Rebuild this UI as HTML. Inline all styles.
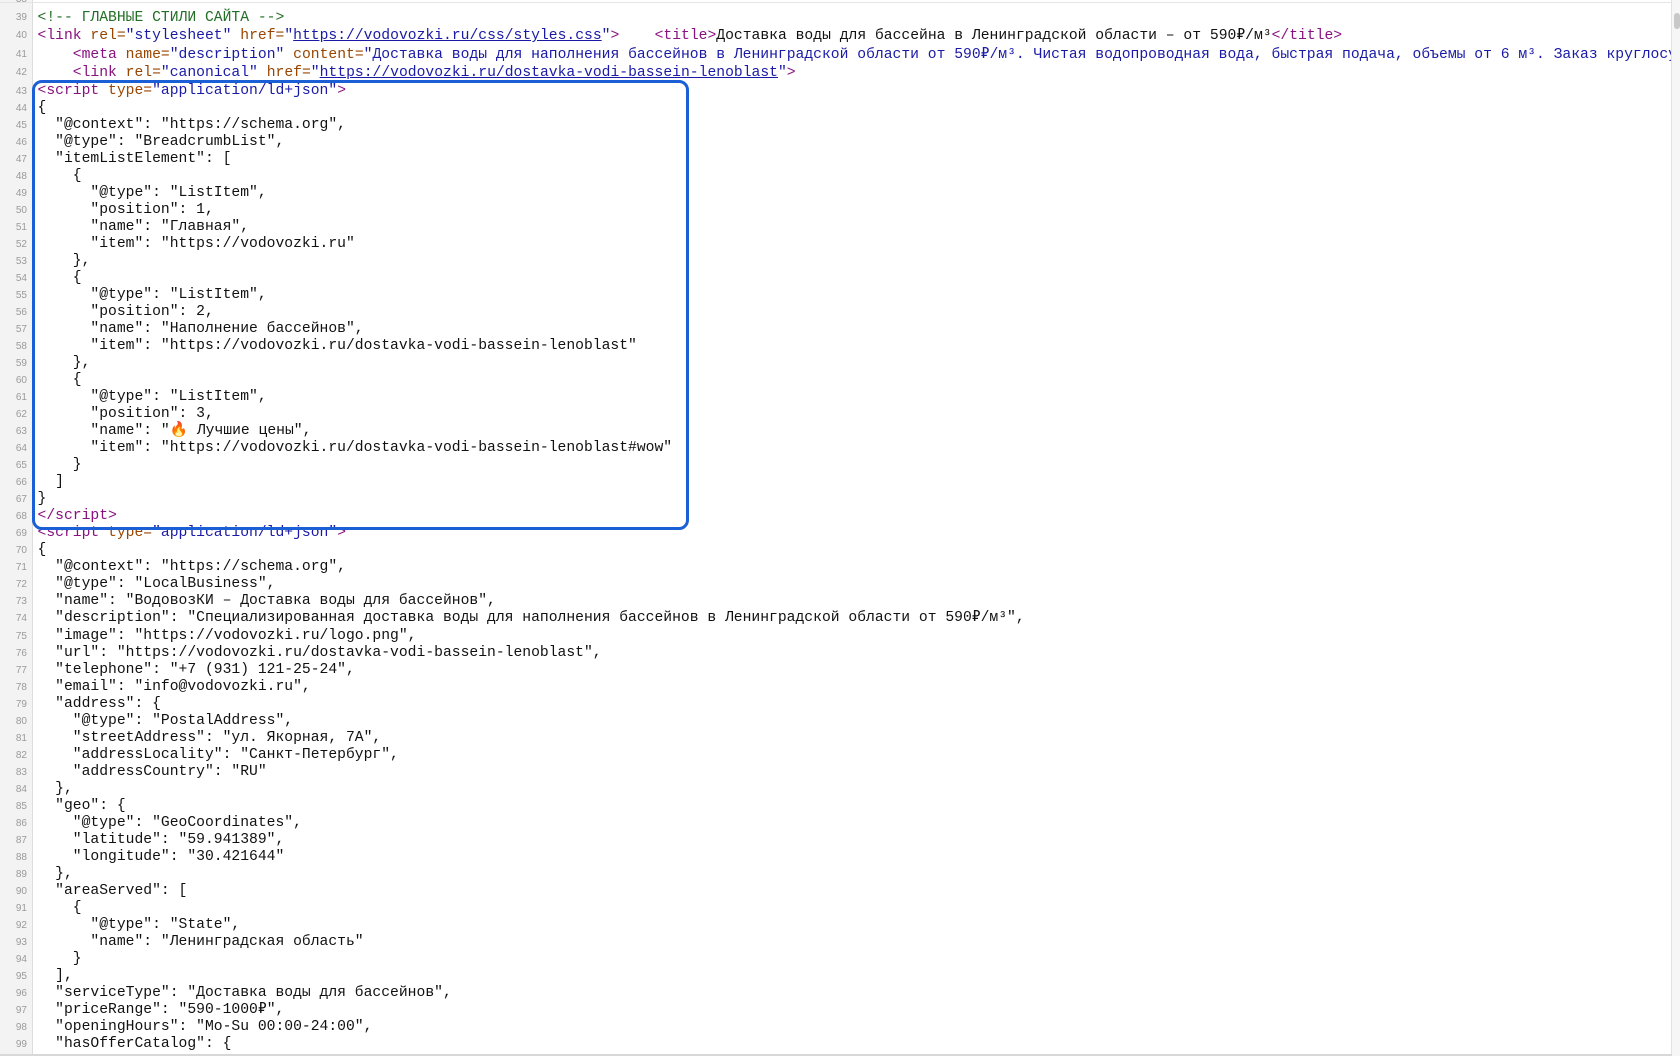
<!DOCTYPE html>
<html><head><meta charset="utf-8"><style>
html,body{margin:0;padding:0;background:#fff;width:1680px;height:1056px;overflow:hidden;position:relative}
.gut{position:absolute;left:0;top:0;width:32px;height:1054px;background:#f3f3f3;border-right:1px solid #dcdcdc}
.topl{position:absolute;left:0;top:2px;width:1672px;height:1px;background:#e4e4e4}
.botl{position:absolute;left:0;top:1054px;width:1672px;height:2px;background:#d8d8d8}
.sb{position:absolute;left:1671px;top:0;width:9px;height:1056px;background:#f6f6f6;border-left:1px solid #e2e2e2}
.sbt{position:absolute;left:1674px;top:13px;width:6px;height:16px;border-radius:3px;background:#c8c8c8}
.nums{position:absolute;left:0;width:27px;text-align:right;font:10px "Liberation Sans",sans-serif;color:#9a9a9a;margin:0}
pre{position:absolute;left:37.5px;margin:0;font:14.7px "Liberation Mono","DejaVu Sans Mono",monospace;color:#111;white-space:pre}
.top{top:-9.1px;line-height:18.2px}
.bot{top:82.5px;line-height:17.03px}
.c{color:#236e25}.t{color:#881280}.a{color:#994500}.v{color:#1a1aa6}.u{text-decoration:underline}
.box{position:absolute;left:32px;top:80px;width:651px;height:444px;border:3.5px solid #1a5fd6;border-radius:10px}
</style></head><body>
<div class="gut"></div><div class="topl"></div>
<div class="nums top">38<br>39<br>40<br>41<br>42</div>
<div class="nums bot">43<br>44<br>45<br>46<br>47<br>48<br>49<br>50<br>51<br>52<br>53<br>54<br>55<br>56<br>57<br>58<br>59<br>60<br>61<br>62<br>63<br>64<br>65<br>66<br>67<br>68<br>69<br>70<br>71<br>72<br>73<br>74<br>75<br>76<br>77<br>78<br>79<br>80<br>81<br>82<br>83<br>84<br>85<br>86<br>87<br>88<br>89<br>90<br>91<br>92<br>93<br>94<br>95<br>96<br>97<br>98<br>99</div>
<pre class="top"> 
<span class="c">&lt;!-- ГЛАВНЫЕ СТИЛИ САЙТА --&gt;</span>
<span class="t">&lt;link </span><span class="a">rel=</span><span class="v">"stylesheet"</span> <span class="a">href=</span><span class="v">"<span class="u">https://vodovozki.ru/css/styles.css</span>"</span><span class="t">&gt;</span>    <span class="t">&lt;title&gt;</span>Доставка воды для бассейна в Ленинградской области – от 590₽/м³<span class="t">&lt;/title&gt;</span>
    <span class="t">&lt;meta </span><span class="a">name=</span><span class="v">"description"</span> <span class="a">content=</span><span class="v">"Доставка воды для наполнения бассейнов в Ленинградской области от 590₽/м³. Чистая водопроводная вода, быстрая подача, объемы от 6 м³. Заказ круглосуточно"</span>
    <span class="t">&lt;link </span><span class="a">rel=</span><span class="v">"canonical"</span> <span class="a">href=</span><span class="v">"<span class="u">https://vodovozki.ru/dostavka-vodi-bassein-lenoblast</span>"</span><span class="t">&gt;</span>
</pre>
<pre class="bot"><span class="t">&lt;script </span><span class="a">type=</span><span class="v">"application/ld+json"</span><span class="t">&gt;</span>
{
  "@context": "https://schema.org",
  "@type": "BreadcrumbList",
  "itemListElement": [
    {
      "@type": "ListItem",
      "position": 1,
      "name": "Главная",
      "item": "https://vodovozki.ru"
    },
    {
      "@type": "ListItem",
      "position": 2,
      "name": "Наполнение бассейнов",
      "item": "https://vodovozki.ru/dostavka-vodi-bassein-lenoblast"
    },
    {
      "@type": "ListItem",
      "position": 3,
      "name": "<span style="color:#e8641b">🔥</span> Лучшие цены",
      "item": "https://vodovozki.ru/dostavka-vodi-bassein-lenoblast#wow"
    }
  ]
}
<span class="t">&lt;/script&gt;</span>
<span class="t">&lt;script </span><span class="a">type=</span><span class="v">"application/ld+json"</span><span class="t">&gt;</span>
{
  "@context": "https://schema.org",
  "@type": "LocalBusiness",
  "name": "ВодовозКИ – Доставка воды для бассейнов",
  "description": "Специализированная доставка воды для наполнения бассейнов в Ленинградской области от 590₽/м³",
  "image": "https://vodovozki.ru/logo.png",
  "url": "https://vodovozki.ru/dostavka-vodi-bassein-lenoblast",
  "telephone": "+7 (931) 121-25-24",
  "email": "info@vodovozki.ru",
  "address": {
    "@type": "PostalAddress",
    "streetAddress": "ул. Якорная, 7А",
    "addressLocality": "Санкт-Петербург",
    "addressCountry": "RU"
  },
  "geo": {
    "@type": "GeoCoordinates",
    "latitude": "59.941389",
    "longitude": "30.421644"
  },
  "areaServed": [
    {
      "@type": "State",
      "name": "Ленинградская область"
    }
  ],
  "serviceType": "Доставка воды для бассейнов",
  "priceRange": "590-1000₽",
  "openingHours": "Mo-Su 00:00-24:00",
  "hasOfferCatalog": {
</pre>
<div class="box"></div>
<div class="sb"></div><div class="sbt"></div>
<div class="botl"></div>
</body></html>
